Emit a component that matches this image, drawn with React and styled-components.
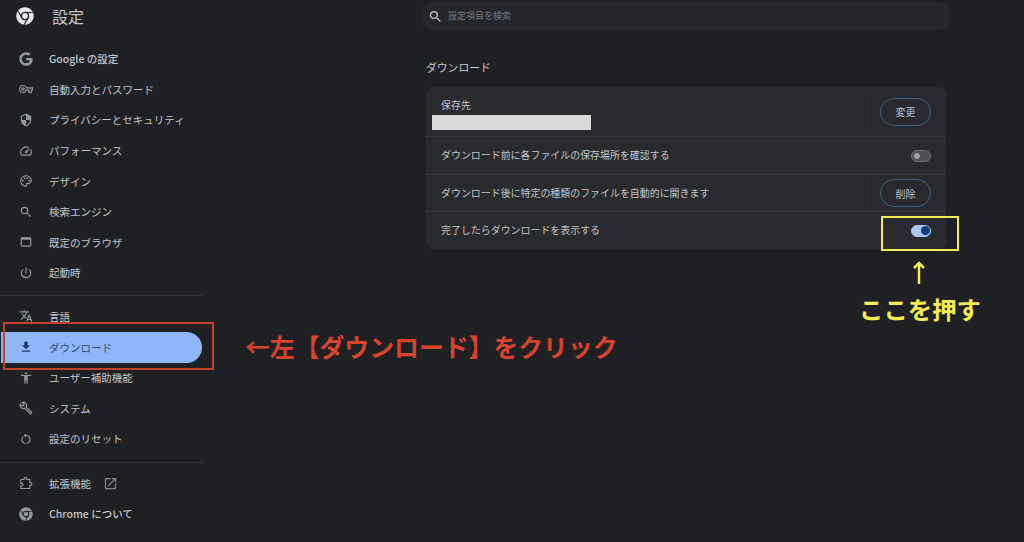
import React from "react";
import styled, { createGlobalStyle } from "styled-components";
import { FaChrome, FaGoogle } from "react-icons/fa";
import {
  MdOutlineVpnKey, MdSecurity, MdOutlineSpeed, MdOutlinePalette, MdSearch, MdOutlineWebAsset,
  MdPowerSettingsNew, MdTranslate, MdFileDownload, MdAccessibilityNew, MdOutlineBuild, MdRestartAlt,
  MdOpenInNew,
} from "react-icons/md";

const Global = createGlobalStyle`
  html, body { margin: 0; padding: 0; background: #1f2023; overflow: hidden; }
  * { box-sizing: border-box; }
  body { font-family: "Noto Sans CJK JP", "Noto Sans", sans-serif; }
`;

const Page = styled.div`
  position: relative;
  width: 1024px;
  height: 542px;
  display: flex;
  background: #1f2023;
  color: #c6c8cb;
`;

const Sidebar = styled.aside`
  width: 203px;
  flex: none;
  display: flex;
  flex-direction: column;
`;

const Brand = styled.header`
  height: 44px;
  padding: 0 0 12px 16px;
  display: flex;
  align-items: center;
  gap: 18px;
  color: #e8eaed;
`;

const BrandTitle = styled.h1`
  margin: 0;
  font-size: 16px;
  font-weight: 400;
  color: #c4c6c9;
  padding-bottom: 1px;
`;

const NavGroup = styled.nav`
  display: flex;
  flex-direction: column;
  padding: 0 0 ${(p) => (p.$tight ? "6px" : "7px")};
`;

const Divider = styled.div`
  height: 1px;
  background: #2f3033;
  margin-bottom: 5.9px;
`;

const NavItem = styled.div`
  height: 30.6px;
  display: flex;
  align-items: center;
  padding-bottom: 1px;
  margin-left: ${(p) => (p.$active ? "1px" : "0")};
  margin-right: ${(p) => (p.$active ? "1px" : "0")};
  padding-left: ${(p) => (p.$active ? "18px" : "19px")};
  border-radius: ${(p) => (p.$active ? "0 16px 16px 0" : "0")};
  background: ${(p) => (p.$active ? "#8fb6f6" : "transparent")};
  color: ${(p) => (p.$active ? "#2a4a80" : "#c4c6c9")};
  font-size: 10.5px;
  font-weight: ${(p) => (p.$strong ? 500 : 400)};
  white-space: nowrap;
`;

const NavIcon = styled.span`
  width: 14px;
  height: 14px;
  margin-right: 16px;
  display: flex;
  align-items: center;
  justify-content: center;
  color: ${(p) => (p.$active ? "#1c3a6e" : "#94979b")};
  font-size: 14px;
`;

const ExternalIcon = styled.span`
  margin-left: 12px;
  display: flex;
  color: #85888c;
  font-size: 15px;
`;

const Main = styled.main`
  flex: 1;
  padding: 2px 0 0 218px;
  display: flex;
  flex-direction: column;
  align-items: flex-start;
`;

const SearchBar = styled.div`
  width: 530px;
  height: 28px;
  padding-left: 7px;
  border-radius: 14px;
  background: #26272a;
  display: flex;
  align-items: center;
  gap: 5px;
  color: #c2c4c7;
  font-size: 15px;
`;

const SearchHint = styled.span`
  font-size: 9px;
  color: #75787c;
  padding-bottom: 1px;
`;

const SectionTitle = styled.h2`
  margin: 27.5px 0 0 5px;
  height: 18px;
  line-height: 18px;
  font-size: 10.8px;
  font-weight: 400;
  color: #c8cacd;
`;

const Card = styled.section`
  width: 520px;
  margin: 11.5px 0 0 5px;
  border-radius: 8px;
  background: #292a2d;
  display: flex;
  flex-direction: column;
`;

const Row = styled.div`
  height: ${(p) => p.$h}px;
  padding: 0 15px;
  display: flex;
  align-items: center;
  border-top: ${(p) => (p.$first ? "none" : "1px solid #38393c")};
`;

const RowLabel = styled.span`
  flex: 1;
  padding-bottom: 2px;
  font-size: 9.95px;
  color: #c2c4c7;
  white-space: nowrap;
`;

const PathBlock = styled.div`
  flex: 1;
  margin: 4px 0 0 -9px;
  display: flex;
  flex-direction: column;
  align-items: flex-start;
`;

const PathLabel = styled.span`
  margin-left: 9px;
  height: 15px;
  line-height: 15px;
  font-size: 9.95px;
  color: #c2c4c7;
`;

const Redaction = styled.div`
  width: 159px;
  height: 15px;
  margin-top: 3px;
  background: #d9d9d9;
`;

const Separator = styled.div`
  width: 1px;
  height: 28px;
  margin-right: 12px;
  background: #343538;
`;

const PillButton = styled.button`
  width: 51px;
  height: 28px;
  padding: 0;
  border: 1px solid #3c627f;
  border-radius: 14px;
  background: transparent;
  color: #a9bfdf;
  font-family: inherit;
  font-size: 10px;
`;

const Track = styled.div`
  width: 20px;
  height: 12px;
  border-radius: 6px;
  padding: 0 1.5px;
  display: flex;
  justify-content: ${(p) => (p.$on ? "flex-end" : "flex-start")};
  align-items: center;
  border: 1px solid ${(p) => (p.$on ? "#a8c7fa" : "#727477")};
  background: ${(p) => (p.$on ? "#a8c7fa" : "#4e4f52")};
`;

const Knob = styled.div`
  flex: none;
  width: ${(p) => (p.$on ? "9px" : "6px")};
  height: ${(p) => (p.$on ? "9px" : "6px")};
  margin-right: ${(p) => (p.$on ? "-1px" : "0")};
  border-radius: 50%;
  background: ${(p) => (p.$on ? "#123a80" : "#9b9da0")};
`;

const RedFrame = styled.div`
  position: absolute;
  left: 3px;
  top: 322px;
  width: 211px;
  height: 48px;
  border: 2px solid #c5402c;
`;

const RedNote = styled.div`
  position: absolute;
  left: 245px;
  top: 328px;
  font-size: 24.85px;
  line-height: 36px;
  font-weight: 700;
  color: #d8432c;
  white-space: nowrap;
`;

const YellowFrame = styled.div`
  position: absolute;
  left: 881px;
  top: 216px;
  width: 78px;
  height: 35px;
  border: 2px solid #f4ec52;
`;

const YellowArrow = styled.svg`
  position: absolute;
  left: 913px;
  top: 261px;
`;

const YellowNote = styled.div`
  position: absolute;
  left: 859px;
  top: 291px;
  font-size: 24.4px;
  line-height: 36px;
  font-weight: 700;
  color: #f4ec52;
  white-space: nowrap;
`;

const PuzzleIcon = () => (
  <svg width="15" height="15" viewBox="0 0 15 15" fill="none" stroke="currentColor" strokeWidth="1.2">
    <path d="M2 3.2h3.4V2.4a1.4 1.4 0 012.8 0v.8h3.4v3.2h.8a1.4 1.4 0 010 2.8h-.8v3.6H2V10h1a1.3 1.3 0 000-2.6H2z" />
  </svg>
);

const first = [
  [<FaGoogle />, "Google の設定", true],
  [<MdOutlineVpnKey />, "自動入力とパスワード"],
  [<MdSecurity />, "プライバシーとセキュリティ"],
  [<MdOutlineSpeed />, "パフォーマンス"],
  [<MdOutlinePalette />, "デザイン"],
  [<MdSearch />, "検索エンジン"],
  [<MdOutlineWebAsset />, "既定のブラウザ"],
  [<MdPowerSettingsNew />, "起動時"],
];

const second = [
  [<MdTranslate />, "言語"],
  [<MdFileDownload />, "ダウンロード", false, true],
  [<MdAccessibilityNew />, "ユーザー補助機能"],
  [<MdOutlineBuild />, "システム"],
  [<MdRestartAlt />, "設定のリセット"],
];

const renderItem = ([icon, label, strong, active]) => (
  <NavItem key={label} $strong={strong} $active={active}>
    <NavIcon $active={active}>{icon}</NavIcon>
    {label}
  </NavItem>
);

export default function App() {
  return (
    <Page>
      <Global />
      <Sidebar>
        <Brand>
          <FaChrome size={18} />
          <BrandTitle>設定</BrandTitle>
        </Brand>
        <NavGroup $tight>{first.map(renderItem)}</NavGroup>
        <Divider />
        <NavGroup>{second.map(renderItem)}</NavGroup>
        <Divider />
        <NavGroup>
          <NavItem>
            <NavIcon><PuzzleIcon /></NavIcon>
            拡張機能
            <ExternalIcon><MdOpenInNew /></ExternalIcon>
          </NavItem>
          <NavItem $strong>
            <NavIcon><FaChrome /></NavIcon>
            Chrome について
          </NavItem>
        </NavGroup>
      </Sidebar>
      <Main>
        <SearchBar>
          <MdSearch />
          <SearchHint>設定項目を検索</SearchHint>
        </SearchBar>
        <SectionTitle>ダウンロード</SectionTitle>
        <Card>
          <Row $first $h={49}>
            <PathBlock>
              <PathLabel>保存先</PathLabel>
              <Redaction />
            </PathBlock>
            <Separator />
            <PillButton>変更</PillButton>
          </Row>
          <Row $h={38}>
            <RowLabel>ダウンロード前に各ファイルの保存場所を確認する</RowLabel>
            <Track><Knob /></Track>
          </Row>
          <Row $h={37}>
            <RowLabel>ダウンロード後に特定の種類のファイルを自動的に開きます</RowLabel>
            <Separator />
            <PillButton>削除</PillButton>
          </Row>
          <Row $h={38}>
            <RowLabel>完了したらダウンロードを表示する</RowLabel>
            <Track $on><Knob $on /></Track>
          </Row>
        </Card>
      </Main>
      <RedFrame />
      <RedNote>←左【ダウンロード】をクリック</RedNote>
      <YellowFrame />
      <YellowArrow width="12" height="24" viewBox="0 0 12 24" fill="none" stroke="#f4ec52" strokeWidth="2.5">
        <path d="M6 23V2M1 7l5-5 5 5" />
      </YellowArrow>
      <YellowNote>ここを押す</YellowNote>
    </Page>
  );
}
